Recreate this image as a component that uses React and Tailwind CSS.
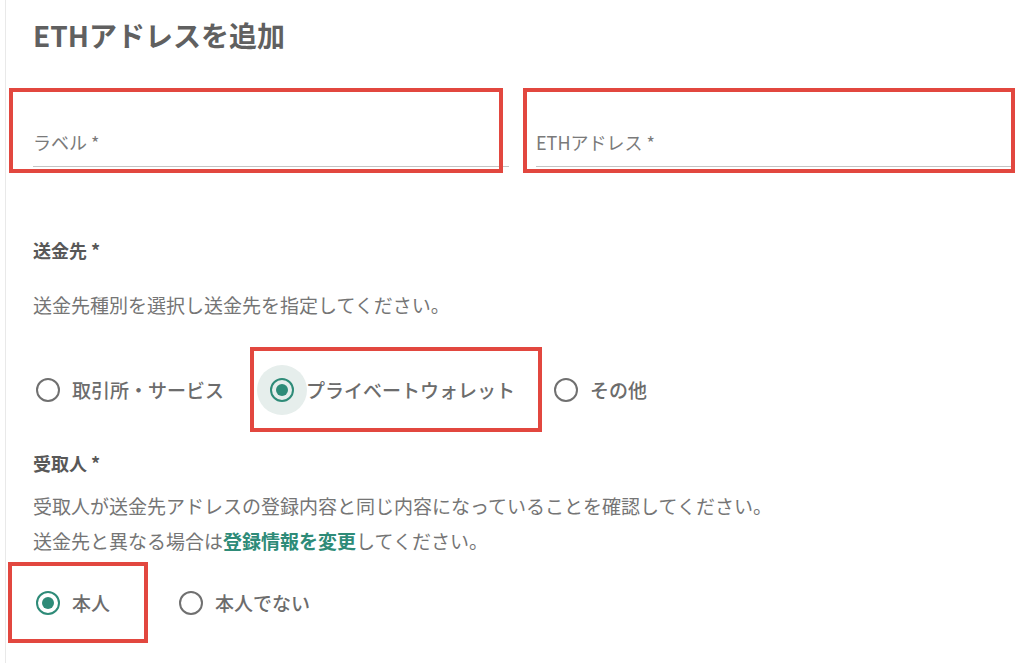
import React from "react";

const font = { fontFamily: '"Noto Sans CJK JP", "Noto Sans", sans-serif' };

function Radio({ checked, halo }) {
  return (
    <span className="relative flex h-[24px] w-[24px] shrink-0 items-center justify-center">
      {halo && (
        <span className="absolute left-[-13px] top-[-13px] h-[50px] w-[50px] rounded-full bg-[#e6eeec]" />
      )}
      <span
        className={`relative flex h-[24px] w-[24px] items-center justify-center rounded-full border-[2.5px] ${
          checked ? "border-[#2e8b78]" : "border-[#707070]"
        }`}
      >
        {checked && <span className="h-[12px] w-[12px] rounded-full bg-[#2e8b78]" />}
      </span>
    </span>
  );
}

function Option({ checked, halo, label, className = "" }) {
  return (
    <div className={`flex items-center ${className}`}>
      <Radio checked={checked} halo={halo} />
      <span className="ml-[12px] text-[19px] font-medium leading-[28px] text-[#6c6c6c]">{label}</span>
    </div>
  );
}

export default function App() {
  return (
    <div className="relative h-[663px] w-[1024px] overflow-hidden bg-white" style={font}>
      <div className="ml-[5px] h-full border-l-[1.5px] border-[#e9e9e9] pl-[27px] pr-[12px]">
        <h1 className="pt-[15px] text-[28px] font-bold leading-[40px] text-[#606060]">
          ETHアドレスを追加
        </h1>

        <div className="mt-[55px] grid grid-cols-2 gap-[27px]">
          <div className="flex h-[57px] items-end border-b-[1.5px] border-[#c4c4c4] pb-[12px]">
            <span className="text-[18px] leading-[24px] text-[#7a7a7a]">ラベル *</span>
          </div>
          <div className="flex h-[57px] items-end border-b-[1.5px] border-[#c4c4c4] pb-[12px]">
            <span className="text-[18px] leading-[24px] text-[#7a7a7a]">ETHアドレス *</span>
          </div>
        </div>

        <div className="mt-[69px] text-[18px] font-bold leading-[28px] text-[#585858]">送金先 *</div>
        <p className="mt-[27px] text-[19px] leading-[28px] text-[#757575]">
          送金先種別を選択し送金先を指定してください。
        </p>

        <div className="mt-[47px] flex h-[48px] items-center">
          <Option className="ml-[3px]" label="取引所・サービス" />
          <Option className="ml-[46px]" checked halo label="プライベートウォレット" />
          <Option className="ml-[39px]" label="その他" />
        </div>

        <div className="mt-[35px] text-[18px] font-bold leading-[28px] text-[#585858]">受取人 *</div>
        <p className="mt-[11px] text-[19px] leading-[35px] text-[#757575]">
          受取人が送金先アドレスの登録内容と同じ内容になっていることを確認してください。
          <br />
          送金先と異なる場合は
          <span className="font-bold text-[#2e8b78]">登録情報を変更</span>
          してください。
        </p>

        <div className="mt-[21px] flex h-[48px] items-center">
          <Option className="ml-[3px]" checked label="本人" />
          <Option className="ml-[69px]" label="本人でない" />
        </div>
      </div>

      {/* annotation boxes */}
      <div className="pointer-events-none absolute left-[9px] top-[88px] h-[85px] w-[494px] border-[4px] border-[#e2473f]" />
      <div className="pointer-events-none absolute left-[523px] top-[88px] h-[85px] w-[492px] border-[4px] border-[#e2473f]" />
      <div className="pointer-events-none absolute left-[250px] top-[347px] h-[85px] w-[292px] border-[4px] border-[#e2473f]" />
      <div className="pointer-events-none absolute left-[8px] top-[562px] h-[81px] w-[140px] border-[4px] border-[#e2473f]" />
    </div>
  );
}
